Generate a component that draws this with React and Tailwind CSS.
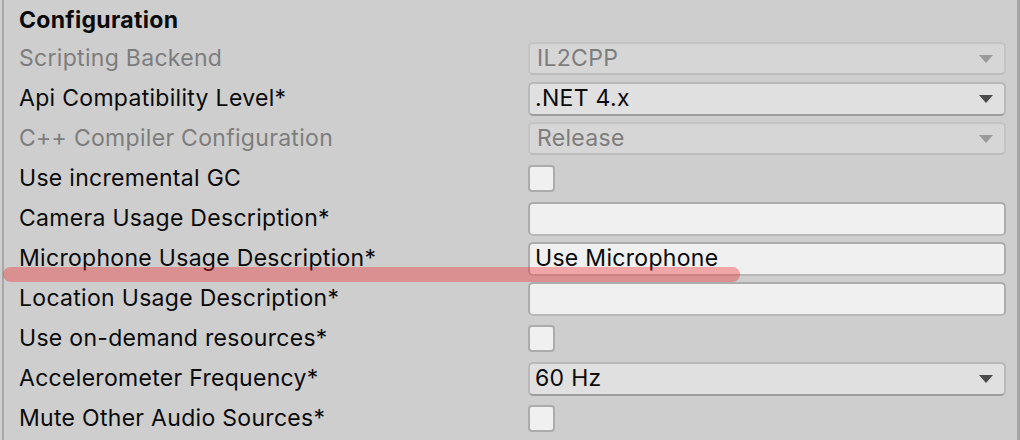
import React from "react";

const rows = [
  { label: "Scripting Backend", kind: "select", value: "IL2CPP", disabled: true },
  { label: "Api Compatibility Level*", kind: "select", value: ".NET 4.x" },
  { label: "C++ Compiler Configuration", kind: "select", value: "Release", disabled: true },
  { label: "Use incremental GC", kind: "check" },
  { label: "Camera Usage Description*", kind: "text", value: "" },
  { label: "Microphone Usage Description*", kind: "text", value: "Use Microphone" },
  { label: "Location Usage Description*", kind: "text", value: "" },
  { label: "Use on-demand resources*", kind: "check" },
  { label: "Accelerometer Frequency*", kind: "select", value: "60 Hz" },
  { label: "Mute Other Audio Sources*", kind: "check" },
];

function Arrow({ disabled }) {
  return (
    <svg width="14" height="8" viewBox="0 0 14 8" className="shrink-0">
      <path d="M0 0 L14 0 L7 8 Z" fill={disabled ? "#9a9a9a" : "#4a4a4a"} />
    </svg>
  );
}

function Control({ row }) {
  if (row.kind === "check") {
    return (
      <div className="w-[27px] h-[27px] rounded-[4px] bg-[#f0f0f0] border-2 border-[#acacac]" />
    );
  }
  if (row.kind === "text") {
    return (
      <div className="h-[34px] rounded-[5px] bg-[#f0f0f0] border-2 border-[#acacac] border-b-[#b8b8b8] flex items-center pl-[5px] text-[#0a0a0a]">
        {row.value}
      </div>
    );
  }
  return (
    <div
      className={
        row.disabled
          ? "h-[33px] rounded-[5px] bg-[#d6d6d6] border-2 border-[#c4c4c4] border-b-[#bcbcbc] flex items-center justify-between pl-[7px] pr-[11px] text-[#7d7d7d]"
          : "h-[34px] rounded-[5px] bg-[#e0e0e0] border-2 border-[#b8b8b8] border-b-[#9d9d9d] flex items-center justify-between pl-[5px] pr-[11px] text-[#0a0a0a]"
      }
    >
      <span>{row.value}</span>
      <Arrow disabled={row.disabled} />
    </div>
  );
}

export default function App() {
  return (
    <div
      className="relative w-[1020px] h-[440px] overflow-hidden bg-[#cecece] pl-[2px] text-[23px] tracking-[0.3px] leading-none"
      style={{ fontFamily: "Inter, 'Noto Sans', sans-serif" }}
    >
      <div className="h-full border-l-2 border-[#a8a8a8] border-r-[3px] border-r-[#a4a4a4]">
        <div className="h-[38px] flex items-center pl-[15px] pt-[3px] font-bold text-[#0a0a0a]">
          Configuration
        </div>
        {rows.map((row) => (
          <div key={row.label} className="h-[40px] flex items-center pt-[1px]">
            <div
              className={
                "w-[524px] shrink-0 pl-[15px] " +
                (row.disabled ? "text-[#7d7d7d]" : "text-[#0a0a0a]")
              }
            >
              {row.label}
            </div>
            <div className="flex-1 pr-[11px]">
              <Control row={row} />
            </div>
          </div>
        ))}
      </div>
      <div className="absolute left-[3px] top-[267px] w-[737px] h-[15px] rounded-full bg-[rgba(240,30,30,0.35)]" />
    </div>
  );
}
